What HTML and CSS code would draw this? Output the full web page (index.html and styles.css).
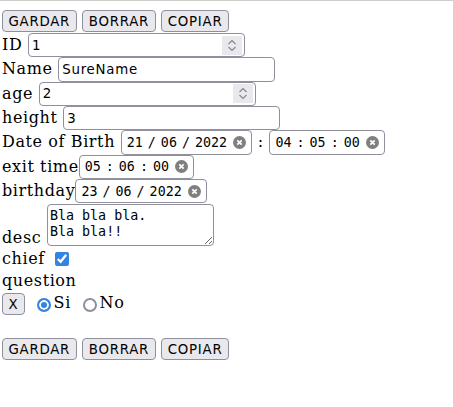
FILE: index.html
```html
<!DOCTYPE html>
<html>
<head>
<meta charset="utf-8">
<title>Form</title>
<link rel="stylesheet" href="styles.css">
</head>
<body>
<form class="form">
<div class="bar"><button type="button" class="btn">GARDAR</button> <button type="button" class="btn">BORRAR</button> <button type="button" class="btn">COPIAR</button></div>
<div class="row">ID <span class="field num"><input class="num-input" type="number" value="1"><span class="spin"><svg width="20" height="19" viewBox="0 0 20 19"><path d="M6.5 8 L10 4.5 L13.5 8" fill="none" stroke="#85858f" stroke-width="1.1"/><path d="M6.5 11 L10 14.5 L13.5 11" fill="none" stroke="#85858f" stroke-width="1.1"/></svg></span></span></div>
<div class="row">Name <input class="field text" type="text" value="SureName"></div>
<div class="row">age <span class="field num"><input class="num-input" type="number" value="2"><span class="spin"><svg width="20" height="19" viewBox="0 0 20 19"><path d="M6.5 8 L10 4.5 L13.5 8" fill="none" stroke="#85858f" stroke-width="1.1"/><path d="M6.5 11 L10 14.5 L13.5 11" fill="none" stroke="#85858f" stroke-width="1.1"/></svg></span></span></div>
<div class="row">height <input class="field text" type="text" value="3"></div>
<div class="row">Date of Birth <span class="field dt"><span class="dt-text">21 / 06 / 2022</span><svg class="clear" width="13" height="13" viewBox="0 0 13 13"><circle cx="6.5" cy="6.5" r="6.5" fill="#7f7f7f"/><path d="M4.3 4.3 L8.7 8.7 M8.7 4.3 L4.3 8.7" stroke="#fff" stroke-width="1.7"/></svg></span> : <span class="field dt"><span class="dt-text">04 : 05 : 00</span><svg class="clear" width="13" height="13" viewBox="0 0 13 13"><circle cx="6.5" cy="6.5" r="6.5" fill="#7f7f7f"/><path d="M4.3 4.3 L8.7 8.7 M8.7 4.3 L4.3 8.7" stroke="#fff" stroke-width="1.7"/></svg></span></div>
<div class="row">exit time<span class="field dt"><span class="dt-text">05 : 06 : 00</span><svg class="clear" width="13" height="13" viewBox="0 0 13 13"><circle cx="6.5" cy="6.5" r="6.5" fill="#7f7f7f"/><path d="M4.3 4.3 L8.7 8.7 M8.7 4.3 L4.3 8.7" stroke="#fff" stroke-width="1.7"/></svg></span></div>
<div class="row">birthday<span class="field dt"><span class="dt-text">23 / 06 / 2022</span><svg class="clear" width="13" height="13" viewBox="0 0 13 13"><circle cx="6.5" cy="6.5" r="6.5" fill="#7f7f7f"/><path d="M4.3 4.3 L8.7 8.7 M8.7 4.3 L4.3 8.7" stroke="#fff" stroke-width="1.7"/></svg></span></div>
<div class="row-desc">desc <textarea class="area">Bla bla bla.
Bla bla!!</textarea></div>
<div class="row-chief">chief <input class="check" type="checkbox" checked></div>
<div class="row-question">question</div>
<div class="row-choice"><button type="button" class="btn btn-x">X</button> <input class="radio" type="radio" name="q" checked>Si <input class="radio" type="radio" name="q">No</div>
<div class="bar bar-bottom"><button type="button" class="btn">GARDAR</button> <button type="button" class="btn">BORRAR</button> <button type="button" class="btn">COPIAR</button></div>
</form>
</body>
</html>
```

FILE: styles.css
```css
html {
  border-top: 1px solid #d0cdc8;
  background: #fff;
}
body {
  margin: 0;
  padding: 9px 2px 0;
  font-family: "DejaVu Serif", serif;
  font-size: 16px;
  letter-spacing: 0.6px;
  color: #000;
}
.form {
  margin: 0;
}
.bar {
  height: 23px;
}
.bar-bottom {
  margin-top: 22px;
}
.btn {
  box-sizing: border-box;
  height: 22px;
  margin: 0;
  padding: 0 5.5px;
  border: 1px solid #8f8f9d;
  border-radius: 4px;
  background: #e9e9ed;
  color: #000;
  font-family: "DejaVu Sans", sans-serif;
  font-size: 13.333px;
  letter-spacing: 0.75px;
  vertical-align: top;
}
.row {
  height: 24.333px;
  white-space: nowrap;
}
.field {
  box-sizing: border-box;
  height: 24.333px;
  margin: 0;
  border: 1px solid #8f8f9d;
  border-radius: 4px;
  background: #fff;
  color: #000;
  font-family: "DejaVu Sans", sans-serif;
  font-size: 13.333px;
  letter-spacing: 0.75px;
}
.text {
  width: 217px;
  padding: 0 3px;
  outline: none;
}
.num {
  display: inline-flex;
  align-items: center;
  width: 217px;
  padding: 0 2px 0 3px;
}
.num-input {
  flex: 1;
  min-width: 0;
  align-self: stretch;
  margin: 0;
  padding: 0;
  border: none;
  outline: none;
  background: transparent;
  color: #000;
  font: inherit;
  letter-spacing: inherit;
  -moz-appearance: textfield;
  appearance: textfield;
}
.num-input::-webkit-inner-spin-button,
.num-input::-webkit-outer-spin-button {
  -webkit-appearance: none;
  margin: 0;
}
.spin {
  display: flex;
  width: 20px;
  height: 19px;
  background: #e9e9ed;
}
.dt {
  display: inline-flex;
  align-items: center;
  gap: 6px;
  padding: 0 5px;
  font-family: "DejaVu Sans Mono", monospace;
  letter-spacing: 0;
  word-spacing: -3px;
}
.dt-text {
  white-space: pre;
}
.clear {
  flex: none;
  display: block;
}
.row-desc {
  height: 44px;
}
.area {
  box-sizing: border-box;
  width: 167px;
  height: 42px;
  margin: 1px 0 0;
  padding: 3px 2px;
  border: 1px solid #8f8f9d;
  border-radius: 4px;
  color: #000;
  font-family: "DejaVu Sans Mono", monospace;
  font-size: 13.333px;
  line-height: 16px;
  letter-spacing: 0;
  vertical-align: -3px;
  outline: none;
}
.row-chief {
  height: 24px;
  line-height: 23.7px;
}
.check {
  width: 14px;
  height: 14px;
  margin: 5px 3px 0 4.5px;
  vertical-align: top;
  accent-color: #3584e4;
}
.row-question {
  height: 20px;
  line-height: 19.6px;
}
.row-choice {
  height: 25px;
  line-height: 24.9px;
}
.btn-x {
  margin-top: 2px;
}
.radio {
  -webkit-appearance: none;
  appearance: none;
  box-sizing: border-box;
  width: 14px;
  height: 14px;
  margin: 6.7px 3px 0 6px;
  border: 2px solid #8f8f9d;
  border-radius: 50%;
  background: #fff;
  vertical-align: top;
}
.radio:checked {
  border-color: #3584e4;
  background: #3584e4;
  box-shadow: inset 0 0 0 2px #fff;
}
```
